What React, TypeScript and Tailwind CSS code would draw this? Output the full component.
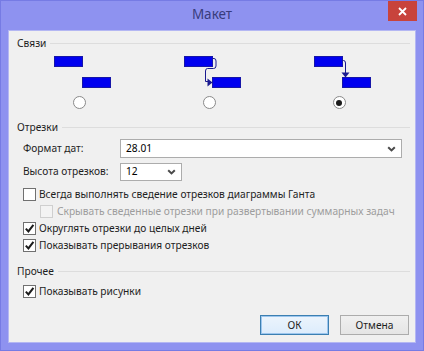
import React from 'react';

const Check: React.FC = () => (
  <svg width="11" height="11" viewBox="0 0 11 11">
    <path d="M1.8 5.6 L4.4 8.4 L9.4 1.8" fill="none" stroke="#1b1b1b" strokeWidth="2" />
  </svg>
);

const CheckRow: React.FC<{ label: string; checked?: boolean; disabled?: boolean; indent?: boolean }> = ({ label, checked, disabled, indent }) => (
  <div className={`flex items-center h-[17px] whitespace-nowrap ${indent ? 'pl-[31px]' : 'pl-[14px]'}`}>
    <span
      className={`w-[13px] h-[13px] border flex items-center justify-center shrink-0 ${
        disabled ? 'border-[#cfcfcf] bg-[#f3f3f3]' : 'border-[#707070] bg-white'
      }`}
    >
      {checked && <Check />}
    </span>
    <span className={`${indent ? 'ml-[4px]' : 'ml-[3px]'} ${disabled ? 'text-[#9d9d9d]' : 'text-[#1e1e1e]'}`}>{label}</span>
  </div>
);

const Section: React.FC<{ title: string }> = ({ title }) => (
  <div className="flex items-center h-[16px] pl-[8px] pr-[5px] gap-[4px] whitespace-nowrap">
    <span className="text-[#1e1e1e]">{title}</span>
    <div className="flex-1 h-px bg-[#dddddd]" />
  </div>
);

const Chevron: React.FC = () => (
  <svg width="9" height="6" viewBox="0 0 9 6">
    <path d="M1.2 1.2 L4.5 4.4 L7.8 1.2" fill="none" stroke="#4a4a4a" strokeWidth="2" />
  </svg>
);

const Radio: React.FC<{ selected?: boolean }> = ({ selected }) => (
  <span className="w-[13px] h-[13px] rounded-full border border-[#8a8a8a] bg-white flex items-center justify-center">
    {selected && <span className="w-[6px] h-[6px] rounded-full bg-[#1b1b1b]" />}
  </span>
);

const Bars: React.FC<{ kind: number }> = ({ kind }) => (
  <svg width="130" height="36" viewBox="0 0 130 36">
    <rect x="40.5" y="3.5" width="28" height="10" fill="#0000f0" stroke="#1616a8" />
    <rect x="68.5" y="24.5" width="28" height="10" fill="#0000f0" stroke="#1616a8" />
    {kind === 1 && (
      <g>
        <path d="M68.5 5.5 H70 Q72 5.5 72 8 V13 Q72 15.5 69.5 15.5 H63.5 Q61.5 15.5 61.5 18 V28.5 H64" fill="none" stroke="#1a1a90" strokeWidth="1" />
        <path d="M63.5 25.5 L68.5 29.5 L63.5 33.5 Z" fill="#1a1a90" />
      </g>
    )}
    {kind === 2 && (
      <g>
        <path d="M68 7.5 H69.5 Q71.5 7.5 71.5 10 V21" fill="none" stroke="#1a1a90" strokeWidth="1" />
        <path d="M67.5 19.5 H75.5 L71.5 24.5 Z" fill="#1a1a90" />
      </g>
    )}
  </svg>
);

const App: React.FC = () => {
  return (
    <div className="w-[424px] h-[351px] bg-[#8e92f0] border border-[#767be4] flex flex-col text-[10.2px] leading-none font-['Segoe_UI','Noto_Sans',sans-serif] select-none overflow-hidden">
      {/* Title bar */}
      <div className="relative h-[29px] shrink-0 flex items-center justify-center">
        <span className="text-[13.5px] text-[#383c7c] mt-[-1px]">Макет</span>
        <div className="absolute top-0 right-[6px] w-[29px] h-[20px] bg-[#c8433c] flex items-center justify-center">
          <svg width="9" height="9" viewBox="0 0 9 9">
            <path d="M1 1 L8 8 M8 1 L1 8" stroke="#fff" strokeWidth="1.8" />
          </svg>
        </div>
      </div>

      {/* Client area */}
      <div className="mx-[7px] h-[313px] bg-[#f0f0f0] border border-[#b4b7f3] flex flex-col pt-[4px]">
        <Section title="Связи" />
        <div className="flex pl-[5px] mt-[2px]">
          {[0, 1, 2].map((k) => (
            <div key={k} className="w-[130px] flex flex-col items-center">
              <Bars kind={k} />
              <div className="mt-[7px]">
                <Radio selected={k === 2} />
              </div>
            </div>
          ))}
        </div>

        <div className="mt-[10px]">
          <Section title="Отрезки" />
        </div>
        <div className="flex items-center h-[19px] mt-[4px] pl-[14px] whitespace-nowrap">
          <span className="w-[97px] text-[#1e1e1e]">Формат дат:</span>
          <div className="w-[282px] h-[19px] bg-white border border-[#acacac] flex items-center justify-between pl-[5px] pr-[5px]">
            <span>28.01</span>
            <Chevron />
          </div>
        </div>
        <div className="flex items-center h-[19px] mt-[4px] pl-[14px] whitespace-nowrap">
          <span className="w-[97px] text-[#1e1e1e]">Высота отрезков:</span>
          <div className="w-[62px] h-[18px] bg-white border border-[#acacac] flex items-center justify-between pl-[5px] pr-[5px]">
            <span>12</span>
            <Chevron />
          </div>
        </div>
        <div className="mt-[5px] flex flex-col">
          <CheckRow label="Всегда выполнять сведение отрезков диаграммы Ганта" />
          <CheckRow label="Скрывать сведенные отрезки при развертывании суммарных задач" disabled indent />
          <CheckRow label="Округлять отрезки до целых дней" checked />
          <CheckRow label="Показывать прерывания отрезков" checked />
        </div>

        <div className="mt-[9px]">
          <Section title="Прочее" />
        </div>
        <div className="mt-[4px]">
          <CheckRow label="Показывать рисунки" checked />
        </div>

        <div className="flex justify-end gap-[11px] pr-[6px] mt-[15px]">
          <button className="w-[69px] h-[20px] border border-[#3c7fb1] bg-[linear-gradient(#ecf4fc,#dcecfc)] text-[#1e1e1e] outline outline-1 outline-[#9cc6ee] outline-offset-[-2px]">
            ОК
          </button>
          <button className="w-[69px] h-[20px] border border-[#acacac] bg-[linear-gradient(#f0f0f0,#e5e5e5)] text-[#1e1e1e]">
            Отмена
          </button>
        </div>
      </div>
    </div>
  );
};

export default App;
